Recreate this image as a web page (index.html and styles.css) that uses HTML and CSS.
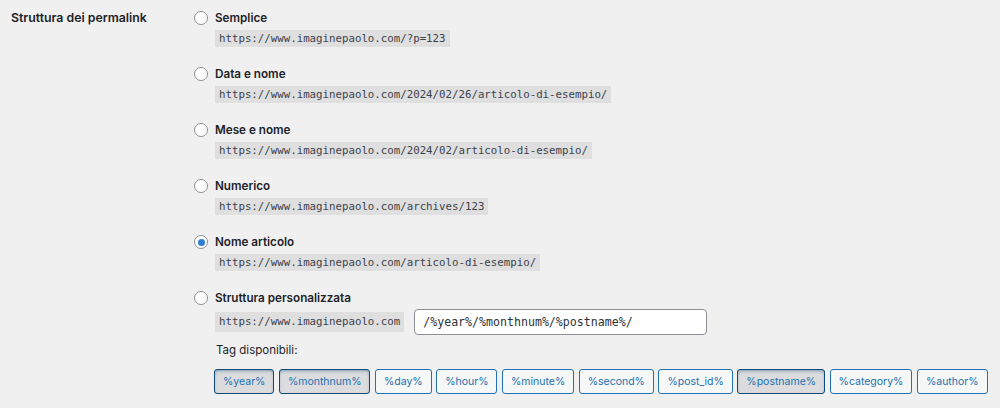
FILE: index.html
```html
<!DOCTYPE html>
<html lang="it">
<head>
<meta charset="utf-8">
<title>Struttura dei permalink</title>
<link rel="stylesheet" href="styles.css">
</head>
<body>
<div class="form-row">
  <div class="th">Struttura dei permalink</div>
  <div class="td">
    <div class="option">
      <label class="choice"><span class="radio"></span><span class="name">Semplice</span></label>
      <code class="url">https://www.imaginepaolo.com/?p=123</code>
    </div>
    <div class="option">
      <label class="choice"><span class="radio"></span><span class="name">Data e nome</span></label>
      <code class="url">https://www.imaginepaolo.com/2024/02/26/articolo-di-esempio/</code>
    </div>
    <div class="option">
      <label class="choice"><span class="radio"></span><span class="name">Mese e nome</span></label>
      <code class="url">https://www.imaginepaolo.com/2024/02/articolo-di-esempio/</code>
    </div>
    <div class="option">
      <label class="choice"><span class="radio"></span><span class="name">Numerico</span></label>
      <code class="url">https://www.imaginepaolo.com/archives/123</code>
    </div>
    <div class="option">
      <label class="choice"><span class="radio checked"></span><span class="name">Nome articolo</span></label>
      <code class="url">https://www.imaginepaolo.com/articolo-di-esempio/</code>
    </div>
    <div class="option custom">
      <label class="choice"><span class="radio"></span><span class="name">Struttura personalizzata</span></label>
      <div class="custom-line">
        <code class="url base">https://www.imaginepaolo.com</code>
        <input class="structure" type="text" value="/%year%/%monthnum%/%postname%/">
      </div>
      <div class="tags-title">Tag disponibili:</div>
      <ul class="tags">
        <li><button class="tag active">%year%</button></li>
        <li><button class="tag active">%monthnum%</button></li>
        <li><button class="tag">%day%</button></li>
        <li><button class="tag">%hour%</button></li>
        <li><button class="tag">%minute%</button></li>
        <li><button class="tag">%second%</button></li>
        <li><button class="tag">%post_id%</button></li>
        <li><button class="tag active">%postname%</button></li>
        <li><button class="tag">%category%</button></li>
        <li><button class="tag">%author%</button></li>
      </ul>
    </div>
  </div>
</div>
</body>
</html>
```
FILE: styles.css
```css
html, body {
  margin: 0;
  padding: 0;
  background: #f0f0f1;
}
body {
  font-family: Inter, "Noto Sans", "Liberation Sans", sans-serif;
  color: #1d2327;
  font-size: 13px;
}
.form-row {
  display: flex;
  padding-top: 8px;
}
.th {
  flex: none;
  width: 183px;
  padding-left: 11px;
  font-weight: 600;
  font-size: 12.3px;
  line-height: 20px;
}
.td {
  display: flex;
  flex-direction: column;
}
.option {
  display: flex;
  flex-direction: column;
  align-items: flex-start;
  margin-bottom: 17px;
}
.choice {
  display: flex;
  align-items: center;
  height: 20px;
  gap: 7px;
}
.radio {
  box-sizing: border-box;
  width: 14px;
  height: 14px;
  border: 1px solid #8c8f94;
  border-radius: 50%;
  background: #fff;
  position: relative;
}
.radio.checked::before {
  content: "";
  position: absolute;
  left: 2.5px;
  top: 2.5px;
  width: 7px;
  height: 7px;
  border-radius: 50%;
  background: #2f7fd0;
}
.name {
  font-weight: 600;
  font-size: 11.7px;
}
.url {
  margin: 2px 0 0 21px;
  font-family: "DejaVu Sans Mono", "Liberation Mono", monospace;
  font-size: 10.75px;
  line-height: 17px;
  height: 17px;
  padding: 0 4px;
  background: #dfdfe0;
  color: #3c434a;
  white-space: nowrap;
}
.custom-line {
  display: flex;
  align-items: center;
  margin-top: 1px;
  margin-left: 21px;
  gap: 10px;
}
.custom-line .url.base {
  margin: 0;
  height: 20px;
  line-height: 20px;
}
.structure {
  box-sizing: border-box;
  width: 293px;
  height: 26px;
  border: 1px solid #8c8f94;
  border-radius: 4px;
  background: #fff;
  padding: 0 8px;
  font-family: "DejaVu Sans Mono", "Liberation Mono", monospace;
  font-size: 11.6px;
  color: #2c3338;
  margin: 0;
}
.tags-title {
  margin: 7px 0 0 22px;
  font-size: 11.5px;
  line-height: 16px;
  color: #1d2327;
}
.tags {
  list-style: none;
  margin: 11px 0 0 20px;
  padding: 0;
  display: flex;
  gap: 4.5px;
}
.tag {
  box-sizing: border-box;
  height: 25px;
  padding: 0 8px;
  font-family: Inter, "Noto Sans", "Liberation Sans", sans-serif;
  font-size: 10.5px;
  color: #2271b1;
  background: #f6f7f7;
  border: 1px solid #2271b1;
  border-radius: 3px;
  margin: 0;
}
.tag.active {
  background: #dcdcde;
  border-color: #0a4b78;
  color: #2271b1;
  box-shadow: inset 0 2px 5px -3px #0a4b78;
}
```
